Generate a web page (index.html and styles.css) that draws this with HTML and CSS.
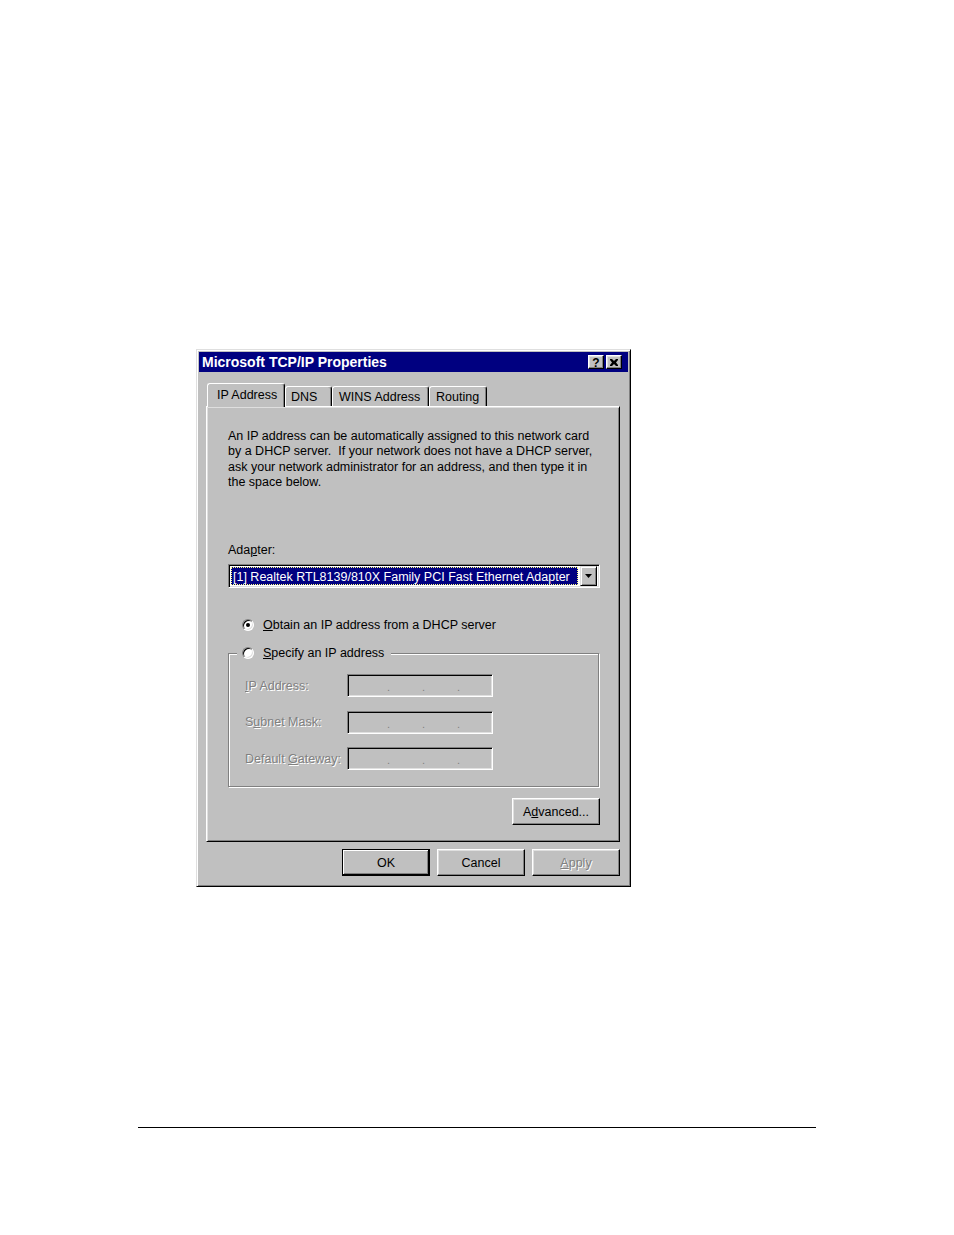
FILE: index.html
```html
<!DOCTYPE html>
<html>
<head>
<meta charset="utf-8">
<title>Microsoft TCP/IP Properties</title>
<link rel="stylesheet" href="styles.css">
</head>
<body>
<div class="page">
  <div class="dialog">
    <div class="titlebar">
      <span class="title">Microsoft TCP/IP Properties</span>
      <div class="caption-btns">
        <span class="cbtn help">?</span>
        <span class="cbtn close"><svg width="8" height="7" viewBox="0 0 8 7"><path d="M0 0h2l2 2 2-2h2v1L6 3.5 8 6v1H6L4 5 2 7H0V6l2-2.5L0 1z" fill="#000"/></svg></span>
      </div>
    </div>
    <div class="tabs">
      <div class="tab active">IP Address</div>
      <div class="tab t-dns">DNS</div>
      <div class="tab t-wins">WINS Address</div>
      <div class="tab t-routing">Routing</div>
    </div>
    <div class="panel">
      <p class="intro">An IP address can be automatically assigned to this network card<br>by a DHCP server.&nbsp; If your network does not have a DHCP server,<br>ask your network administrator for an address, and then type it in<br>the space below.</p>
      <div class="adapter-label">Ada<u>p</u>ter:</div>
      <div class="combo">
        <div class="combo-field"><span class="combo-sel">[1] Realtek RTL8139/810X Family PCI Fast Ethernet Adapter</span></div>
        <div class="combo-btn"><svg width="7" height="4" viewBox="0 0 7 4"><path d="M0 0h7L3.5 4z" fill="#000"/></svg></div>
      </div>
      <div class="radio-row obtain"><span class="radio checked"></span><span><u>O</u>btain an IP address from a DHCP server</span></div>
      <fieldset class="group">
        <legend class="radio-row"><span class="radio"></span><span><u>S</u>pecify an IP address</span></legend>
        <div class="field-row"><span class="flabel"><u>I</u>P Address:</span><span class="ipbox"><span class="dot">.</span><span class="dot">.</span><span class="dot">.</span></span></div>
        <div class="field-row"><span class="flabel">S<u>u</u>bnet Mask:</span><span class="ipbox"><span class="dot">.</span><span class="dot">.</span><span class="dot">.</span></span></div>
        <div class="field-row"><span class="flabel">Default <u>G</u>ateway:</span><span class="ipbox"><span class="dot">.</span><span class="dot">.</span><span class="dot">.</span></span></div>
      </fieldset>
      <div class="adv-row"><button class="btn">A<u>d</u>vanced...</button></div>
    </div>
    <div class="footer">
      <button class="btn default">OK</button>
      <button class="btn">Cancel</button>
      <button class="btn disabled"><u>A</u>pply</button>
    </div>
  </div>
  <div class="rule"></div>
</div>
</body>
</html>
```
FILE: styles.css
```css
* { box-sizing: border-box; }
html, body { margin: 0; padding: 0; background: #fff; }
body { font-family: "Liberation Sans", Arial, sans-serif; font-size: 12.5px; color: #000; }

.page { width: 954px; height: 1235px; padding-top: 349px; }

.dialog {
  margin-left: 196px;
  width: 435px;
  height: 538px;
  background: #c0c0c0;
  border: 1px solid;
  border-color: #dfdfdf #000 #000 #dfdfdf;
  box-shadow: inset 1px 1px #fff, inset -1px -1px #808080;
  padding: 2px;
  display: flex;
  flex-direction: column;
}

.titlebar {
  height: 20px;
  background: #000080;
  color: #fff;
  display: flex;
  align-items: center;
  justify-content: space-between;
  padding: 0 6px 0 3px;
  flex: none;
}
.title { font-weight: bold; font-size: 14px; }
.caption-btns { display: flex; gap: 2px; }
.cbtn {
  width: 16px; height: 14px;
  background: #c0c0c0;
  border: 1px solid;
  border-color: #fff #000 #000 #fff;
  box-shadow: inset -1px -1px #808080, inset 1px 1px #dfdfdf;
  display: flex; align-items: center; justify-content: center;
  color: #000;
}
.help { font-weight: bold; font-size: 12px; line-height: 1; padding-top: 1px; }

.tabs {
  display: flex;
  align-items: flex-end;
  height: 24px;
  margin: 11px 0 0 8px;
  flex: none;
}
.tab {
  height: 21px;
  background: #c0c0c0;
  border-top: 1px solid #fff;
  border-left: 1px solid #fff;
  border-right: 1px solid #000;
  box-shadow: inset -1px 0 #808080;
  border-radius: 3px 3px 0 0;
  padding-left: 6px;
  line-height: 20px;
  white-space: nowrap;
}
.tab.active {
  height: 24px;
  width: 78px;
  padding-left: 9px;
  line-height: 22px;
  position: relative;
  z-index: 1;
}
.t-dns { width: 47px; padding-left: 5px; }
.t-wins { width: 97px; padding-left: 6px; }
.t-routing { width: 58px; padding-left: 6px; }

.panel {
  margin: -1px 0 0 7px;
  width: 414px;
  height: 436px;
  border: 1px solid;
  border-color: #fff #000 #000 #fff;
  box-shadow: inset 1px 1px #dfdfdf, inset -1px -1px #808080;
  padding: 22px 19px 0 21px;
  flex: none;
}

.intro { margin: 0; line-height: 15.33px; white-space: nowrap; }
.adapter-label { margin-top: 53px; line-height: 15px; }

.combo {
  margin-top: 6px;
  width: 372px;
  height: 24px;
  background: #fff;
  border: 1px solid;
  border-color: #808080 #fff #fff #808080;
  box-shadow: inset 1px 1px #000, inset -1px -1px #dfdfdf;
  padding: 1px 2px 1px 1px;
  display: flex;
}
.combo-field {
  flex: 1;
  margin: 1px 2px 1px 1px;
  background: #000080;
  border: 1px dotted #ffff80;
  color: #fff;
  padding: 1px 0 0 1px;
  line-height: 16px;
  white-space: nowrap;
  overflow: hidden;
}
.combo-btn {
  width: 17px;
  height: 20px;
  background: #c0c0c0;
  border: 1px solid;
  border-color: #dfdfdf #000 #000 #dfdfdf;
  box-shadow: inset 1px 1px #fff, inset -1px -1px #808080;
  display: flex; align-items: center; justify-content: center;
}

.radio-row { display: flex; align-items: center; gap: 9px; height: 16px; white-space: nowrap; }
.obtain { margin-top: 29px; padding-left: 14px; }
.radio {
  width: 12px; height: 12px;
  border-radius: 50%;
  background: #fff;
  border: 1px solid;
  border-color: #808080 #fff #fff #808080;
  box-shadow: inset 1px 1px #000, inset -1px -1px #dfdfdf;
  display: flex; align-items: center; justify-content: center;
  flex: none;
}
.radio.checked::after {
  content: "";
  width: 4px; height: 4px;
  border-radius: 50%;
  background: #000;
}

.group {
  margin: 12px 0 0 0;
  width: 371px;
  border: 1px solid #808080;
  box-shadow: inset 1px 1px #fff, 1px 1px #fff;
  padding: 13px 0 16px 8px;
  min-width: 0;
}
.group legend { padding: 0 7px 0 5px; margin: 0; background: #c0c0c0; }

.field-row { display: flex; align-items: center; height: 23px; margin-left: 8px; }
.field-row + .field-row { margin-top: 13.5px; }
.flabel {
  width: 102px;
  color: #808080;
  text-shadow: 1px 1px #fff;
  white-space: nowrap;
}
.ipbox {
  width: 146px; height: 23px;
  border: 1px solid;
  border-color: #808080 #fff #fff #808080;
  box-shadow: inset 1px 1px #000, inset -1px -1px #dfdfdf;
  display: flex;
  padding: 5px 0 0 39px;
  color: #808080;
  font-size: 11px;
  line-height: 14px;
}
.dot { width: 36px; }

.adv-row { display: flex; justify-content: flex-end; margin-top: 11px; }

.btn {
  width: 88px; height: 27px;
  background: #c0c0c0;
  border: 1px solid;
  border-color: #fff #000 #000 #fff;
  box-shadow: inset -1px -1px #808080, inset 1px 1px #dfdfdf;
  font-family: "Liberation Sans", Arial, sans-serif;
  font-size: 12.5px;
  color: #000;
  padding: 0;
  border-radius: 0;
}
.btn.default {
  border-color: #000;
  box-shadow: inset -1px -1px #000, inset 1px 1px #fff, inset -2px -2px #808080;
}
.btn.disabled { color: #808080; text-shadow: 1px 1px #fff; }

.footer {
  display: flex;
  justify-content: flex-end;
  gap: 7px;
  margin-top: 7px;
  padding-right: 8px;
}

.rule {
  margin: 240px 0 0 138px;
  width: 678px;
  height: 1px;
  background: #000;
}
```
